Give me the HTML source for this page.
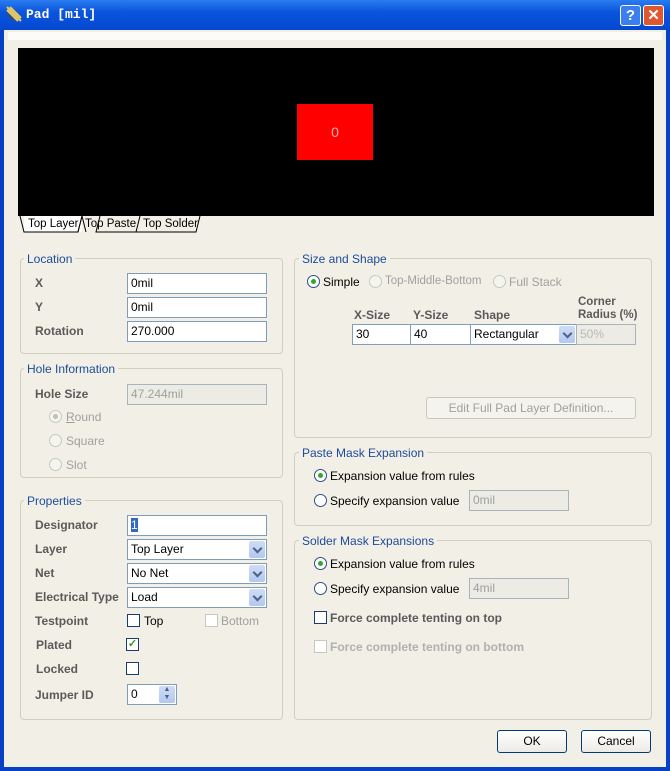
<!DOCTYPE html>
<html><head><style>
*{box-sizing:border-box;margin:0;padding:0}
body{width:670px;height:771px;overflow:hidden;background:#0841c4;font-family:"Liberation Sans",sans-serif;font-size:12px;color:#000;position:relative}
.a{position:absolute}
.title{left:0;top:0;width:670px;height:30px;background:linear-gradient(#2a7cf0,#0a55dc 40%,#0548d0);}
.client{left:4px;top:30px;width:662px;height:737px;background:#f1efe6}
.grp{position:absolute;border:1px solid #d0d0bf;border-radius:4px}
.lg{position:absolute;background:#f1efe6;color:#1d4c9a;padding:0 3px;font-size:12px}
.lbl{position:absolute;font-weight:bold;color:#5a5a5a;font-size:12px}
.in{position:absolute;height:21px;border:1px solid #7f9db9;background:#fff;padding:2px 3px;font-size:12px}
.dis{background:#ecebe4;color:#a0a0a0;border-color:#a8b3c0}
.dd{position:absolute;right:1px;top:1px;width:16px;height:17px;background:linear-gradient(#cfdcf6,#b3c8ef);border-radius:2px}
.dd::after{content:"";position:absolute;left:5px;top:4px;width:5px;height:5px;border-right:2px solid #4d6185;border-bottom:2px solid #4d6185;transform:rotate(45deg)}
.rad{position:absolute;width:13px;height:13px;border:1px solid #2f4f7f;border-radius:50%;background:#fff}
.rad.on::after{content:"";position:absolute;left:3px;top:3px;width:5px;height:5px;border-radius:50%;background:#2fa82f}
.rad.d{border-color:#c8c8c0;background:#f5f5f0}
.rad.d.on::after{background:#c0c0b8}
.cb{position:absolute;width:13px;height:13px;border:1px solid #1c3c6c;background:#fff}
.cb.d{border-color:#c8c8c0}
.t{position:absolute;font-size:12px}
.g{color:#a0a0a0}
.btn{position:absolute;border:1px solid #003c74;border-radius:3px;background:linear-gradient(#fff,#ecebe6);text-align:center;line-height:20px}
</style></head><body>
<div class="a title"></div>
<svg class="a" style="left:6px;top:6px" width="16" height="16"><path d="M1 1 L15 15 M4 1 L15 12 M1 4 L12 15" stroke="#e8c860" stroke-width="2"/><path d="M1 8 L8 15" stroke="#305070" stroke-width="2"/></svg>
<div class="a" style="left:26px;top:7px;color:#fff;font-family:'Liberation Mono',monospace;font-weight:bold;font-size:13px">Pad [mil]</div>
<div class="a" style="left:620px;top:5px;width:21px;height:21px;border:1px solid #fff;border-radius:3px;background:#3b7ef0;color:#fff;font-weight:bold;font-size:15px;text-align:center;line-height:19px">?</div>
<div class="a" style="left:643px;top:5px;width:21px;height:21px;border:1px solid #fff;border-radius:3px;background:#e0562e;color:#fff;font-weight:bold;font-size:15px;text-align:center;line-height:19px">✕</div>
<div class="a client"></div>
<div class="a" style="left:8px;top:32px;width:654px;height:8px;background:#fbfbf8"></div>
<div class="a" style="left:18px;top:48px;width:636px;height:168px;background:#000"></div>
<div class="a" style="left:297px;top:104px;width:76px;height:56px;background:#f00;color:#ffb0b0;text-align:center;line-height:56px;font-size:14px">0</div>
<svg class="a" style="left:18px;top:216px" width="190" height="18"><rect x="6" y="0" width="58" height="16" fill="#fff"/><path d="M2 0 L6 16 L60 16 L64 0 M64 0 L60 16 M82 0 L78 16 L118 16 L122 0 M122 0 L118 16 L178 16 L182 0" stroke="#000" fill="none" stroke-width="1"/><path d="M60 16 L64 0 L68 16" stroke="#000" fill="none"/></svg>
<div class="t" style="left:28px;top:218px;font-size:11.5px">Top Layer</div>
<div class="t" style="left:85px;top:218px;font-size:11.5px">Top Paste</div>
<div class="t" style="left:143px;top:218px;font-size:11.5px">Top Solder</div>

<div class="grp" style="left:20px;top:258px;width:263px;height:96px"></div>
<div class="lg" style="left:24px;top:252px">Location</div>
<div class="lbl" style="left:35px;top:276px">X</div>
<div class="lbl" style="left:35px;top:300px">Y</div>
<div class="lbl" style="left:35px;top:324px">Rotation</div>
<div class="in" style="left:127px;top:273px;width:140px">0mil</div>
<div class="in" style="left:127px;top:297px;width:140px">0mil</div>
<div class="in" style="left:127px;top:321px;width:140px">270.000</div>

<div class="grp" style="left:20px;top:368px;width:263px;height:110px"></div>
<div class="lg" style="left:24px;top:362px">Hole Information</div>
<div class="lbl" style="left:35px;top:387px">Hole Size</div>
<div class="in dis" style="left:127px;top:384px;width:140px">47.244mil</div>
<div class="rad d on" style="left:49px;top:410px"></div><div class="t g" style="left:66px;top:410px"><u>R</u>ound</div>
<div class="rad d" style="left:49px;top:434px"></div><div class="t g" style="left:66px;top:434px">Square</div>
<div class="rad d" style="left:49px;top:458px"></div><div class="t g" style="left:66px;top:458px">Slot</div>

<div class="grp" style="left:20px;top:500px;width:263px;height:220px"></div>
<div class="lg" style="left:24px;top:494px">Properties</div>
<div class="lbl" style="left:35px;top:518px">Designator</div>
<div class="lbl" style="left:35px;top:542px">Layer</div>
<div class="lbl" style="left:35px;top:566px">Net</div>
<div class="lbl" style="left:35px;top:590px">Electrical Type</div>
<div class="lbl" style="left:35px;top:614px">Testpoint</div>
<div class="lbl" style="left:36px;top:638px">Plated</div>
<div class="lbl" style="left:36px;top:662px">Locked</div>
<div class="lbl" style="left:35px;top:688px">Jumper ID</div>
<div class="in" style="left:127px;top:515px;width:140px"><span style="background:#316ac5;color:#fff">1</span></div>
<div class="in" style="left:127px;top:539px;width:140px">Top Layer<div class="dd"></div></div>
<div class="in" style="left:127px;top:563px;width:140px">No Net<div class="dd"></div></div>
<div class="in" style="left:127px;top:587px;width:140px">Load<div class="dd"></div></div>
<div class="cb" style="left:127px;top:614px"></div><div class="t" style="left:144px;top:614px">Top</div>
<div class="cb d" style="left:205px;top:614px"></div><div class="t g" style="left:221px;top:614px">Bottom</div>
<div class="cb" style="left:126px;top:638px;color:#2a9a2a;font-size:11px;line-height:11px;text-align:center;font-weight:bold">✓</div>
<div class="cb" style="left:126px;top:662px"></div>
<div class="in" style="left:127px;top:684px;width:50px">0<div class="a" style="right:1px;top:1px;width:16px;height:17px;background:linear-gradient(#cfdcf6,#b3c8ef);border-radius:2px;color:#4d6185;font-size:7px;line-height:8px;text-align:center">▲<br>▼</div></div>

<div class="grp" style="left:294px;top:258px;width:358px;height:180px"></div>
<div class="lg" style="left:299px;top:252px">Size and Shape</div>
<div class="rad on" style="left:307px;top:275px"></div><div class="t" style="left:323px;top:275px">Simple</div>
<div class="rad d" style="left:369px;top:275px"></div><div class="t g" style="left:385px;top:275px;font-size:11.5px">Top-Middle-Bottom</div>
<div class="rad d" style="left:493px;top:275px"></div><div class="t g" style="left:509px;top:275px">Full Stack</div>
<div class="lbl" style="left:354px;top:308px">X-Size</div>
<div class="lbl" style="left:413px;top:308px">Y-Size</div>
<div class="lbl" style="left:474px;top:308px">Shape</div>
<div class="lbl" style="left:578px;top:296px;line-height:13px;font-size:11.5px">Corner<br>Radius (%)</div>
<div class="in" style="left:352px;top:324px;width:59px">30</div>
<div class="in" style="left:410px;top:324px;width:61px">40</div>
<div class="in" style="left:470px;top:324px;width:107px">Rectangular<div class="dd"></div></div>
<div class="in dis" style="left:576px;top:324px;width:60px;color:#b8b8b8">50%</div>
<div class="btn" style="left:426px;top:397px;width:210px;height:22px;border-color:#c8c8c0;color:#a0a0a0;background:#f4f3ee">Edit Full Pad Layer Definition...</div>

<div class="grp" style="left:294px;top:452px;width:358px;height:74px"></div>
<div class="lg" style="left:299px;top:446px">Paste Mask Expansion</div>
<div class="rad on" style="left:314px;top:469px"></div><div class="t" style="left:330px;top:469px">Expansion value from rules</div>
<div class="rad" style="left:314px;top:494px"></div><div class="t" style="left:330px;top:494px">Specify expansion value</div>
<div class="in dis" style="left:469px;top:490px;width:100px">0mil</div>

<div class="grp" style="left:294px;top:540px;width:358px;height:180px"></div>
<div class="lg" style="left:299px;top:534px">Solder Mask Expansions</div>
<div class="rad on" style="left:314px;top:557px"></div><div class="t" style="left:330px;top:557px">Expansion value from rules</div>
<div class="rad" style="left:314px;top:582px"></div><div class="t" style="left:330px;top:582px">Specify expansion value</div>
<div class="in dis" style="left:469px;top:578px;width:100px">4mil</div>
<div class="cb" style="left:314px;top:611px"></div><div class="lbl" style="left:330px;top:611px">Force complete tenting on top</div>
<div class="cb d" style="left:314px;top:640px"></div><div class="lbl" style="left:330px;top:640px;color:#b0b0b0">Force complete tenting on bottom</div>

<div class="btn" style="left:497px;top:730px;width:70px;height:23px">OK</div>
<div class="btn" style="left:581px;top:730px;width:70px;height:23px">Cancel</div>
</body></html>
